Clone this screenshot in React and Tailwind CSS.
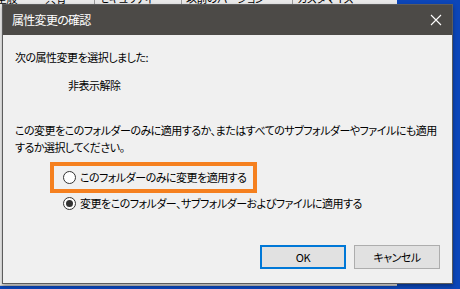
import { useState } from "react";

const font = "font-['Yu_Gothic_UI','Meiryo_UI','Noto_Sans_CJK_JP',sans-serif] [font-feature-settings:'palt']";

function Radio({ checked, label, onClick }) {
  return (
    <button type="button" onClick={onClick} className="flex items-center gap-[4px] h-[17px] text-left">
      <span className="w-[13px] h-[13px] rounded-full border border-[#333333] bg-white flex items-center justify-center shrink-0">
        {checked && <span className="w-[7px] h-[7px] rounded-full bg-[#333333]"></span>}
      </span>
      <span className="text-[11px] tracking-[-0.5px] leading-[17px] text-black whitespace-nowrap">{label}</span>
    </button>
  );
}

export default function App() {
  const [scope, setScope] = useState("all"); // "folder" | "all"

  return (
    <div className={`relative w-[460px] h-[289px] overflow-hidden bg-[#0c46b9] ${font}`}>
      {/* Properties window behind the dialog */}
      <div className="absolute left-0 top-0 w-[397px] h-[286px] bg-[#f0f0f0] border-b border-[#c8c8c8]">
        <div className="flex h-[5px] overflow-hidden bg-[#e9e9e9] text-[11px] leading-[12px] text-black">
          <div className="flex gap-[28px] -mt-[8px] whitespace-nowrap tracking-[-0.5px]">
            <span className="-ml-[4px]">全般</span>
            <span>共有</span>
            <span className="border-l border-[#9a9a9a] pl-[4px]">セキュリティ</span>
            <span className="border-l border-[#9a9a9a] pl-[4px]">以前のバージョン</span>
            <span className="border-l border-[#9a9a9a] pl-[4px]">カスタマイズ</span>
          </div>
        </div>
      </div>

      {/* Confirm attribute changes dialog */}
      <div className="absolute left-[2px] top-[4px] w-[451px] h-[280px] flex flex-col border border-[#5c5c5c] bg-[#f0f0f0] shadow-[0_2px_4px_rgba(0,0,0,0.35)]">
        <div className="h-[30px] shrink-0 flex items-center justify-between bg-[#4c4a47] pl-[9px] pr-[9px]">
          <span className="text-[12px] tracking-[-0.7px] text-white">属性変更の確認</span>
          <svg width="12" height="12" viewBox="0 0 12 12" className="mr-[1px]">
            <path d="M1 1 L11 11 M11 1 L1 11" stroke="#ffffff" strokeWidth="1.1" fill="none" />
          </svg>
        </div>

        <div className="flex-1 flex flex-col px-[12px] pt-[14px] pb-[14px] text-[11px] tracking-[-0.5px] leading-[17px] text-black">
          <p>次の属性変更を選択しました:</p>
          <p className="mt-[11px] ml-[53px]">非表示解除</p>
          <p className="mt-[28px] whitespace-nowrap">
            この変更をこのフォルダーのみに適用するか、またはすべてのサブフォルダーやファイルにも適用
            <br />
            するか選択してください。
          </p>

          <div className="mt-[6px] ml-[35px] w-[207px] h-[31px] border-4 border-[#f5801f] flex items-center pl-[9px]">
            <Radio checked={scope === "folder"} label="このフォルダーのみに変更を適用する" onClick={() => setScope("folder")} />
          </div>
          <div className="mt-[2px] ml-[48px]">
            <Radio checked={scope === "all"} label="変更をこのフォルダー、サブフォルダーおよびファイルに適用する" onClick={() => setScope("all")} />
          </div>

          <div className="mt-auto flex justify-end gap-[8px]">
            <button type="button" className="w-[86px] h-[24px] border-2 border-[#0078d7] bg-[#e1e1e1] text-[11px] text-black">OK</button>
            <button type="button" className="w-[86px] h-[24px] border border-[#adadad] bg-[#e1e1e1] text-[11px] text-black">キャンセル</button>
          </div>
        </div>
      </div>
    </div>
  );
}
